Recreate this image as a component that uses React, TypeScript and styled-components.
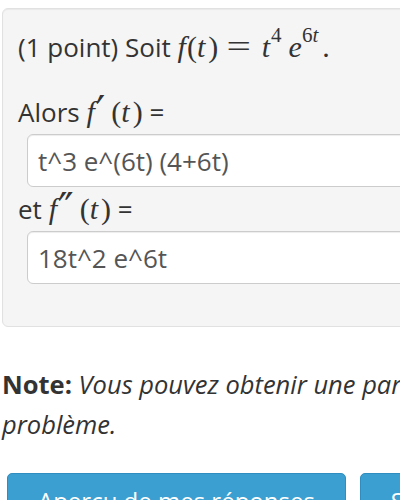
import React from "react";
import styled, { createGlobalStyle } from "styled-components";

const GlobalStyle = createGlobalStyle`
  html, body {
    margin: 0;
    padding: 0;
    background: #ffffff;
    overflow: hidden;
  }
  body {
    font-family: "Open Sans", "DejaVu Sans", sans-serif;
    font-size: 26px;
    color: #333333;
  }
`;

const Page = styled.div`
  width: 780px;
  padding: 8px 0 0 2px;
`;

const Panel = styled.div`
  background: #f5f5f5;
  border: 1px solid #e1e1e1;
  border-radius: 6px;
  box-shadow: inset 0 1px 1px rgba(0, 0, 0, 0.05);
  padding: 20px 15px 38px 15px;
`;

const Statement = styled.p`
  margin: 0 0 29px 0;
  line-height: 36px;
`;

const Label = styled.div`
  line-height: 36px;
`;

const AnswerInput = styled.input`
  display: block;
  box-sizing: border-box;
  width: 680px;
  height: 53px;
  margin: 4px 0 4px 9px;
  padding: 0 10px;
  border: 1px solid #cccccc;
  border-radius: 6px;
  background: #ffffff;
  box-shadow: inset 0 1px 1px rgba(0, 0, 0, 0.075);
  font-family: "Open Sans", "DejaVu Sans", sans-serif;
  font-size: 26px;
  color: #555555;
  outline: none;
`;

const MathSpan = styled.span<{ $lead?: number }>`
  font-family: "Liberation Serif", "Times New Roman", serif;
  font-size: 30px;
  line-height: 0;
  margin-left: ${(p) => p.$lead ?? 0}px;
`;

const Mi = styled.span<{ $r?: number; $l?: number }>`
  font-style: italic;
  margin-left: ${(p) => p.$l ?? 0}px;
  margin-right: ${(p) => p.$r ?? 0}px;
`;

const Mo = styled.span<{ $r?: number; $l?: number }>`
  font-style: normal;
  margin-left: ${(p) => p.$l ?? 0}px;
  margin-right: ${(p) => p.$r ?? 0}px;
`;

const Rel = styled.span`
  display: inline-block;
  font-family: "Liberation Serif", "Times New Roman", serif;
  font-size: 31px;
  line-height: 1;
  transform: scaleX(1.4);
  margin: 0 14px 0 12px;
`;

const Sup = styled.span<{ $r?: number }>`
  font-size: 21px;
  line-height: 0;
  vertical-align: 15px;
  margin-right: ${(p) => p.$r ?? 0}px;
`;

const Prime = styled.span<{ $r?: number }>`
  font-family: "DejaVu Sans", sans-serif;
  font-style: normal;
  font-size: 42px;
  line-height: 0;
  vertical-align: -4px;
  margin-left: 1px;
  margin-right: ${(p) => p.$r ?? 0}px;
`;

const Note = styled.p`
  margin: 37px 0 0 0;
  line-height: 40px;
  font-size: 25.5px;
  color: #333333;
`;

const NoteLead = styled.strong`
  font-weight: 700;
`;

const NoteText = styled.em`
  font-style: italic;
`;

const ButtonRow = styled.div`
  display: flex;
  gap: 14px;
  margin: 29px 0 0 5px;
`;

const Button = styled.button`
  flex: none;
  padding: 9px 30px 10px;
  border: 1px solid #2f8dbf;
  border-radius: 5px;
  background: #3c9fd1;
  color: #ffffff;
  font-family: "Open Sans", "DejaVu Sans", sans-serif;
  font-size: 24px;
  line-height: 36px;
  cursor: pointer;
`;

export default function App() {
  return (
    <>
      <GlobalStyle />
      <Page>
        <Panel>
          <Statement>
            (1 point) Soit{" "}
            <MathSpan $lead={0}>
              <Mi $r={1}>f</Mi>
              <Mo>(</Mo>
              <Mi $r={3}>t</Mi>
              <Mo>)</Mo>
              <Rel>=</Rel>
              <Mi $r={1}>t</Mi>
              <Sup $r={7}>4</Sup>
              <Mi>e</Mi>
              <Sup $r={4}>
                6<Mi>t</Mi>
              </Sup>
              <Mo>.</Mo>
            </MathSpan>
          </Statement>

          <Label>
            Alors{" "}
            <MathSpan $lead={0}>
              <Mi>f</Mi>
              <Prime $r={6}>′</Prime>
              <Mo>(</Mo>
              <Mi $r={3}>t</Mi>
              <Mo>)</Mo>
            </MathSpan>{" "}
            =
          </Label>
          <AnswerInput readOnly value="t^3 e^(6t) (4+6t)" />

          <Label>
            et{" "}
            <MathSpan $lead={0}>
              <Mi>f</Mi>
              <Prime $r={6}>″</Prime>
              <Mo>(</Mo>
              <Mi $r={3}>t</Mi>
              <Mo>)</Mo>
            </MathSpan>{" "}
            =
          </Label>
          <AnswerInput readOnly value="18t^2 e^6t" />
        </Panel>

        <Note>
          <NoteLead>Note:</NoteLead>{" "}
          <NoteText>
            Vous pouvez obtenir une partie des points pour ce
            <br />
            problème.
          </NoteText>
        </Note>

        <ButtonRow>
          <Button type="button">Aperçu de mes réponses</Button>
          <Button type="button">Soumettre les réponses</Button>
        </ButtonRow>
      </Page>
    </>
  );
}
